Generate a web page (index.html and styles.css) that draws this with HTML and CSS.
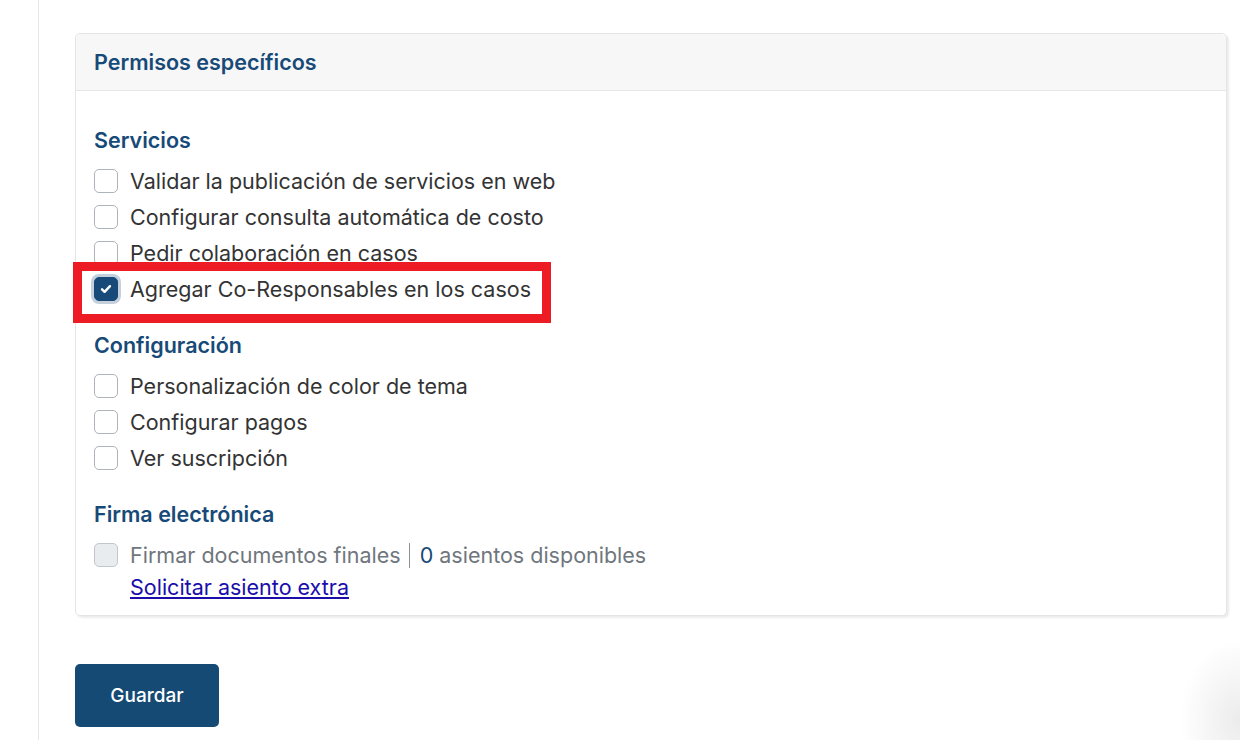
FILE: index.html
```html
<!DOCTYPE html>
<html lang="es">
<head>
  <meta charset="UTF-8" />
  <title>Permisos específicos</title>
  <link rel="stylesheet" href="styles.css">
</head>
<body>
  <div class="page">
    <aside class="side"></aside>
    <main class="content">
      <section class="card">
        <div class="card-header">Permisos específicos</div>
        <div class="card-body">
          <h3 class="group">Servicios</h3>
          <label class="check"><span class="box"></span>Validar la publicación de servicios en web</label>
          <label class="check"><span class="box"></span>Configurar consulta automática de costo</label>
          <label class="check"><span class="box"></span>Pedir colaboración en casos</label>
          <label class="check marked"><span class="box on"><svg viewBox="0 0 12 12" width="14" height="14"><path d="M2.6 6.3l2.2 2.1 4.6-4.8" fill="none" stroke="#fff" stroke-width="2.1" stroke-linecap="round" stroke-linejoin="round"/></svg></span>Agregar Co-Responsables en los casos</label>

          <h3 class="group">Configuración</h3>
          <label class="check"><span class="box"></span>Personalización de color de tema</label>
          <label class="check"><span class="box"></span>Configurar pagos</label>
          <label class="check"><span class="box"></span>Ver suscripción</label>

          <h3 class="group">Firma electrónica</h3>
          <label class="check disabled"><span class="box"></span>Firmar documentos finales <span class="sep"></span><span class="num">0</span>&nbsp;asientos disponibles</label>
          <a class="extra" href="#">Solicitar asiento extra</a>
        </div>
      </section>
      <button class="save" type="button">Guardar</button>
    </main>
  </div>
  <div class="glow"></div>
</body>
</html>
```

FILE: styles.css
```css
body { margin: 0; font-family: Inter, "Noto Sans", sans-serif; background: #fff; color: #343a40; overflow: hidden; }
.page { display: flex; height: 740px; overflow: hidden; }
.side { width: 38px; border-right: 1px solid #e6e6e6; flex-shrink: 0; }
.content { flex: 1; padding: 33px 13px 0 36px; }

.card { border: 1px solid #e5e5e5; border-radius: 5px; box-shadow: 2px 2px 2px rgba(0,0,0,0.08); background: #fff; }
.card-header { background: #f7f7f7; border-bottom: 1px solid #e6e6e6; height: 56px; display: flex; align-items: center; padding-left: 18px; font-size: 21.5px; font-weight: 600; color: #174a78; border-radius: 5px 5px 0 0; }
.card-body { padding: 34px 18px 14px; }

.group { margin: 0 0 7px; font-size: 21.5px; font-weight: 600; color: #174a78; line-height: 31px; }
.check + .group { margin-top: 23px; }

.check { display: flex; align-items: center; height: 36px; font-size: 21.5px; color: #333; position: relative; }
.box { width: 22px; height: 22px; border: 1px solid #aeb4bb; border-radius: 5px; margin-right: 12px; display: flex; align-items: center; justify-content: center; flex-shrink: 0; background: #fff; }
.box.on { background: #174a78; border-color: #174a78; box-shadow: 0 0 0 3px #c5d0dc; }
.marked::after { content: ""; position: absolute; left: -21px; top: -9px; width: 460px; height: 43px; border: 9px solid #ed1c24; }

.disabled { color: #6f767d; }
.disabled .box { background: #e9ecef; border-color: #c2c7cc; }
.sep { display: inline-block; width: 1px; height: 25px; background: #8a9197; margin: 0 10px 0 8px; }
.num { color: #174a78; }

.extra { display: inline-block; margin-left: 36px; font-size: 21.5px; color: #1a0dab; line-height: 28px; }

.save { margin-top: 48px; width: 144px; height: 63px; border: none; border-radius: 5px; background: #154a74; color: #fff; font-family: Inter, sans-serif; font-size: 19px; font-weight: 500; }

.glow { position: fixed; right: -60px; bottom: -60px; width: 120px; height: 160px; border-radius: 50%; background: radial-gradient(closest-side, rgba(0,0,0,0.08), rgba(0,0,0,0)); }
```
